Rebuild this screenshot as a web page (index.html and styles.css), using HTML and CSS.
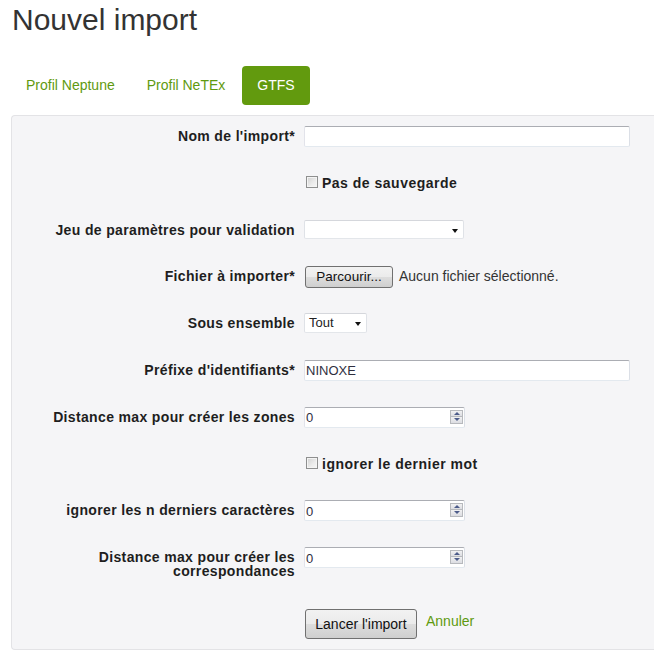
FILE: index.html
```html
<!DOCTYPE html>
<html lang="fr">
<head>
<meta charset="utf-8">
<title>Nouvel import</title>
<link rel="stylesheet" href="styles.css">
</head>
<body>
<div class="page">
  <h1 class="title">Nouvel import</h1>
  <ul class="tabs">
    <li><a class="tab" href="#">Profil Neptune</a></li>
    <li><a class="tab" href="#">Profil NeTEx</a></li>
    <li><a class="tab active" href="#">GTFS</a></li>
  </ul>
  <form class="well">
    <div class="row">
      <label class="lbl">Nom de l'import*</label>
      <div class="ctl"><input class="text wide" type="text"></div>
    </div>
    <div class="row">
      <span class="lbl"></span>
      <div class="ctl"><label class="check"><input type="checkbox" class="cb"><span>Pas de sauvegarde</span></label></div>
    </div>
    <div class="row">
      <label class="lbl">Jeu de paramètres pour validation</label>
      <div class="ctl"><span class="select sel-long"><span class="val"></span><span class="arrow"></span></span></div>
    </div>
    <div class="row">
      <label class="lbl">Fichier à importer*</label>
      <div class="ctl file"><button type="button" class="btn btn-file">Parcourir...</button><span class="nofile">Aucun fichier sélectionné.</span></div>
    </div>
    <div class="row">
      <label class="lbl">Sous ensemble</label>
      <div class="ctl"><span class="select sel-short"><span class="val">Tout</span><span class="arrow"></span></span></div>
    </div>
    <div class="row">
      <label class="lbl">Préfixe d'identifiants*</label>
      <div class="ctl"><input class="text wide" type="text" value="NINOXE"></div>
    </div>
    <div class="row">
      <label class="lbl">Distance max pour créer les zones</label>
      <div class="ctl"><span class="num"><input class="text numin" type="text" value="0"><span class="spin"><span class="up"></span><span class="down"></span></span></span></div>
    </div>
    <div class="row">
      <span class="lbl"></span>
      <div class="ctl"><label class="check"><input type="checkbox" class="cb"><span>ignorer le dernier mot</span></label></div>
    </div>
    <div class="row">
      <label class="lbl">ignorer les n derniers caractères</label>
      <div class="ctl"><span class="num"><input class="text numin" type="text" value="0"><span class="spin"><span class="up"></span><span class="down"></span></span></span></div>
    </div>
    <div class="row row-tall">
      <label class="lbl">Distance max pour créer les correspondances</label>
      <div class="ctl"><span class="num"><input class="text numin" type="text" value="0"><span class="spin"><span class="up"></span><span class="down"></span></span></span></div>
    </div>
    <div class="row row-actions">
      <span class="lbl"></span>
      <div class="ctl actions"><button type="button" class="btn btn-submit">Lancer l'import</button><a href="#" class="cancel">Annuler</a></div>
    </div>
  </form>
</div>
</body>
</html>
```

FILE: styles.css
```css
html, body {
  margin: 0;
  padding: 0;
  background: #ffffff;
  overflow: hidden;
}

body {
  font-family: "Liberation Sans", Arial, sans-serif;
  font-size: 14px;
  color: #333333;
}

.page {
  padding-left: 11px;
}

.title {
  margin: 0;
  padding-top: 3px;
  font-size: 30px;
  line-height: 33px;
  font-weight: normal;
  color: #333333;
  padding-left: 1px;
}

.tabs {
  list-style: none;
  margin: 30px 0 0 0;
  padding: 0;
  display: flex;
}

.tabs li {
  margin-right: 2px;
}

.tab {
  display: block;
  padding: 10px 15px;
  line-height: 19px;
  font-size: 14px;
  color: #5f9a0f;
  text-decoration: none;
  border-radius: 4px;
}

.tab.active {
  background: #629a0e;
  color: #ffffff;
}

.well {
  margin-top: 10px;
  background: #f5f5f7;
  border: 1px solid #e3e3e6;
  border-right: none;
  border-radius: 4px 0 0 4px;
  padding: 10px 0 10px 0;
}

.row {
  display: grid;
  grid-template-columns: 283px 1fr;
  column-gap: 9px;
  height: 46.8px;
  align-items: start;
}

.row-tall {
  height: 62px;
}

.row-actions {
  height: 30px;
}

.lbl {
  display: block;
  text-align: right;
  font-weight: bold;
  font-size: 14px;
  line-height: 14px;
  letter-spacing: 0.35px;
  padding-top: 3px;
  color: #1e1e1e;
}

.ctl {
  display: flex;
  align-items: flex-start;
}

.text {
  box-sizing: border-box;
  height: 21px;
  margin: 0;
  padding: 1px 2px 0 1px;
  border: 1px solid;
  border-color: #abadb3 #dbdfe6 #e3e9ef #e2e3ea;
  border-radius: 2px;
  background: #ffffff;
  font-family: "Liberation Sans", Arial, sans-serif;
  font-size: 13px;
  color: #2f2f3f;
  outline: none;
}

.wide {
  width: 326px;
}

.check {
  display: flex;
  align-items: flex-start;
  font-weight: bold;
  font-size: 14px;
  line-height: 14px;
  letter-spacing: 0.5px;
  color: #1e1e1e;
  padding-top: 3px;
}

.cb {
  appearance: none;
  -webkit-appearance: none;
  box-sizing: border-box;
  width: 12px;
  height: 12px;
  margin: 0 4px 0 2px;
  border: 1px solid #8e8f8f;
  background: linear-gradient(135deg, #d0d0d0 0%, #ececec 60%, #f6f6f6 100%);
  box-shadow: inset 0 0 0 1px #f4f4f4;
}

.select {
  position: relative;
  box-sizing: border-box;
  display: block;
  height: 19px;
  border: 1px solid;
  border-color: #d5d7dc #dfe2e7 #e3e6ea #dfe2e7;
  border-radius: 2px;
  background: #ffffff;
  font-size: 13px;
  line-height: 17px;
  color: #222;
}

.sel-long {
  width: 160px;
}

.sel-short {
  width: 63px;
  height: 20px;
}

.select .val {
  padding-left: 4px;
}

.select .arrow {
  position: absolute;
  right: 5px;
  top: 8px;
  width: 0;
  height: 0;
  border-left: 3.5px solid transparent;
  border-right: 3.5px solid transparent;
  border-top: 4px solid #111;
}

.btn {
  box-sizing: border-box;
  border: 1px solid #707070;
  border-radius: 3px;
  background: linear-gradient(#f2f2f2 0%, #ebebeb 50%, #dddddd 51%, #cfcfcf 100%);
  font-family: "Liberation Sans", Arial, sans-serif;
  font-size: 14px;
  color: #111;
  margin: 0;
  padding: 0 10px;
  white-space: nowrap;
}

.btn-file {
  margin-left: 1px;
  width: 88px;
  height: 22px;
  line-height: 18px;
  padding: 0;
  font-size: 13.5px;
}

.nofile {
  margin-left: 6px;
  line-height: 21px;
  font-size: 14px;
  color: #333;
}

.num {
  position: relative;
  display: block;
}

.numin {
  width: 161px;
}

.spin {
  position: absolute;
  right: 2px;
  top: 3px;
  width: 13px;
  height: 14px;
  display: flex;
  flex-direction: column;
}

.spin span {
  position: relative;
  box-sizing: border-box;
  height: 7px;
  border: 1px solid #b7b9bd;
  background: linear-gradient(#f1f1f2, #dcdde2);
}

.spin .down {
  border-top: none;
}

.spin .up::after,
.spin .down::after {
  content: "";
  position: absolute;
  left: 2.5px;
  width: 0;
  height: 0;
  border-left: 3px solid transparent;
  border-right: 3px solid transparent;
}

.spin .up::after {
  top: 1px;
  border-bottom: 3px solid #4d5c8a;
}

.spin .down::after {
  top: 1px;
  border-top: 3px solid #4d5c8a;
}

.actions {
  align-items: flex-start;
}

.btn-submit {
  margin-left: 1px;
  width: 112px;
  height: 30px;
  line-height: 26px;
  padding: 0;
}

.cancel {
  margin-left: 9px;
  margin-top: 4px;
  color: #5f9a0f;
  text-decoration: none;
  font-size: 14px;
  line-height: 16px;
}
```
